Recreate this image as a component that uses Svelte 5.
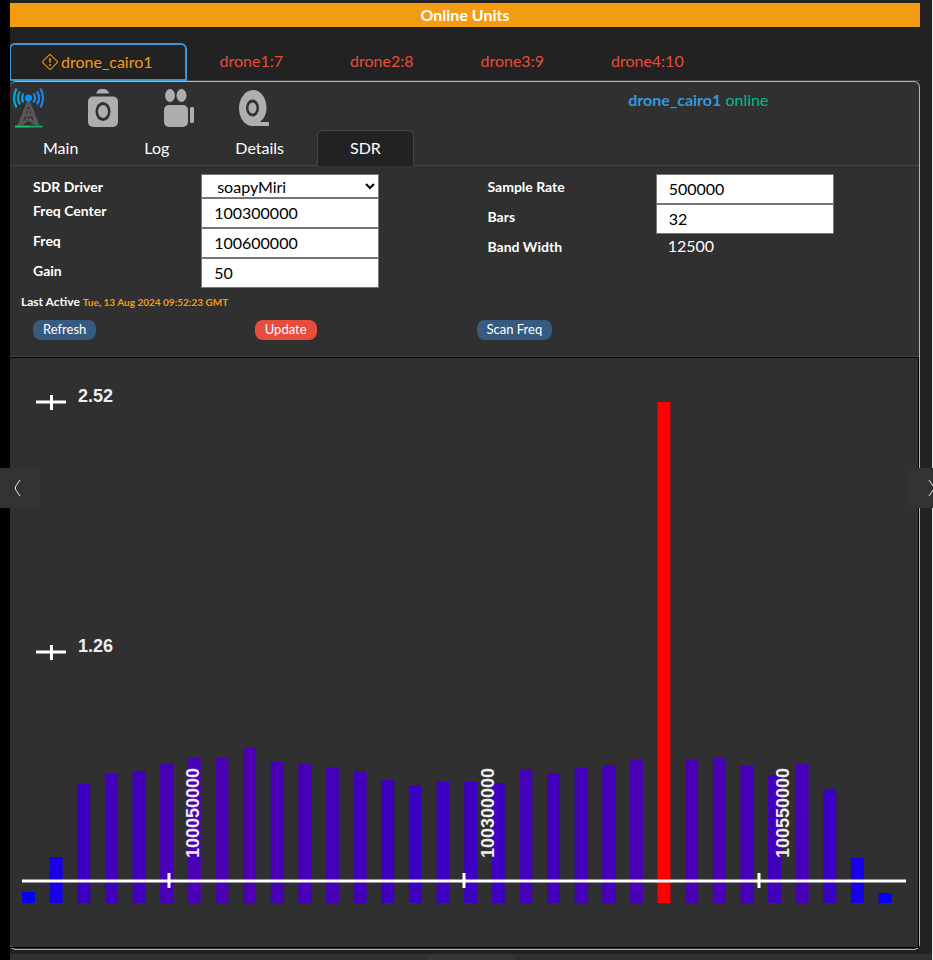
<script>
  const units = ['drone1:7', 'drone2:8', 'drone3:9', 'drone4:10'];
  const sections = ['Main', 'Log', 'Details', 'SDR'];
  let section = $state('SDR');

  // Signal level of each frequency bin, in chart units
  const levels = [
    11, 46, 119, 129, 132, 140, 145, 145, 155, 141, 140, 136, 132, 123, 118, 121,
    121, 120, 134, 130, 135, 138, 143, 501, 143, 146, 137, 128, 139, 113, 45, 10
  ];
  const peak = Math.max(...levels);
  const baseline = 545;
  const step = 27.63;

  function shade(level) {
    const r = Math.round((level / peak) * 255);
    return `rgb(${r}, 0, ${255 - r})`;
  }

  const yTicks = [
    { label: '2.52', y: 44 },
    { label: '1.26', y: 294 }
  ];
  const xTicks = [
    { label: '100050000', x: 158 },
    { label: '100300000', x: 453 },
    { label: '100550000', x: 748 }
  ];
</script>

<div class="page">
  <main>
    <h1>Online Units</h1>

    <nav class="units" aria-label="Units">
      <a class="unit active" href="#drone_cairo1">
        <svg width="16" height="16" viewBox="0 0 16 16" fill="currentColor" aria-hidden="true">
          <path d="M6.95.435c.58-.58 1.52-.58 2.1 0l6.515 6.516c.58.58.58 1.519 0 2.098L9.05 15.565c-.58.58-1.519.58-2.098 0L.435 9.05a1.48 1.48 0 0 1 0-2.098zm1.4.7a.495.495 0 0 0-.7 0L1.134 7.65a.495.495 0 0 0 0 .7l6.516 6.516a.495.495 0 0 0 .7 0l6.516-6.516a.495.495 0 0 0 0-.7z" />
          <path d="M7.002 11a1 1 0 1 1 2 0 1 1 0 0 1-2 0M7.1 4.995a.905.905 0 1 1 1.8 0l-.35 3.507a.552.552 0 0 1-1.1 0z" />
        </svg>
        <span>drone_cairo1</span>
      </a>
      {#each units as unit}
        <a class="unit" href={'#' + unit}>{unit}</a>
      {/each}
    </nav>

    <section class="panel">
      <div class="top">
        <div class="tools">
          <button type="button" aria-label="Telemetry">
            <svg width="40" height="42" viewBox="0 0 40 42" fill="none" aria-hidden="true">
              <g stroke="#0b9be8" stroke-width="2.200">
                <path d="M6.500 0.500Q1.500 10 6.500 19.500" stroke="#08a5dc" />
                <path d="M10 3.500Q6 10 10 16.500" stroke="#08a5dc" />
                <path d="M13.500 5.500Q10.500 10 13.500 14.500" />
                <path d="M23.500 5.500Q26.500 10 23.500 14.500" stroke="#1688f0" />
                <path d="M27 3.500Q31 10 27 16.500" stroke="#1688f0" />
                <path d="M30.500 0.500Q35.500 10 30.500 19.500" stroke="#1a82e8" />
              </g>
              <path d="M17 13H20L29.500 37.500H25L18.500 33L12 37.500H7.500Z" fill="#575757" />
              <path d="M18.500 18L20 21H17ZM16 24L18 22.500L16.500 27ZM21 24L19 22.500L20.500 27ZM15 28L17 29L13 34ZM22 28L20 29L24 34ZM18.500 28L20 30L18.500 31L17 30Z" fill="#303030" />
              <circle cx="18.500" cy="10" r="3.500" fill="#0d8df5" />
              <path d="M5 38.500H19" stroke="#10c96c" stroke-width="2" />
              <path d="M19 38.500H32.500" stroke="#08a95b" stroke-width="2" />
            </svg>
          </button>
          <button type="button" aria-label="Take photo">
            <svg width="40" height="42" viewBox="0 0 40 42" aria-hidden="true">
              <path d="M11 5.500Q13 1 16 1H19Q22 1 24.500 5.500Z" fill="#aeaeae" />
              <rect x="3" y="8.500" width="30" height="30.500" rx="5" fill="#aeaeae" />
              <ellipse cx="18" cy="23.500" rx="7.500" ry="9.500" fill="#303030" />
              <ellipse cx="18" cy="23.500" rx="5" ry="6.500" fill="#aeaeae" />
            </svg>
          </button>
          <button type="button" aria-label="Record video">
            <svg width="40" height="42" viewBox="0 0 40 42" fill="#aeaeae" aria-hidden="true">
              <ellipse cx="10" cy="7.500" rx="5" ry="6.500" />
              <ellipse cx="21.500" cy="7.500" rx="5" ry="6.500" />
              <rect x="4" y="17" width="24" height="22" rx="5" />
              <rect x="30" y="19" width="4" height="16" rx="1.500" />
            </svg>
          </button>
          <button type="button" aria-label="Recordings">
            <svg width="40" height="42" viewBox="0 0 40 42" aria-hidden="true">
              <path d="M18 2C26 2 31.500 10 31.500 20Q31.500 29 25 34H34V38H17C9 37.500 4 29 4 20S10 2 18 2Z" fill="#aeaeae" />
              <ellipse cx="17.500" cy="20" rx="6.500" ry="8.500" fill="#303030" />
              <ellipse cx="17.500" cy="20" rx="4" ry="5.500" fill="#aeaeae" />
            </svg>
          </button>
        </div>
        <p class="status"><strong>drone_cairo1</strong> <span>online</span></p>
      </div>

      <div class="sections" role="tablist">
        {#each sections as name}
          <button type="button" role="tab" aria-selected={section === name} class:selected={section === name} onclick={() => (section = name)}>{name}</button>
        {/each}
      </div>

      <form onsubmit={(e) => e.preventDefault()}>
        <div class="fields">
          <div class="group">
            <div class="row short">
              <label for="driver">SDR Driver</label>
              <select id="driver"><option>soapyMiri</option></select>
            </div>
            <div class="row">
              <label for="center">Freq Center</label>
              <input id="center" type="text" value="100300000" />
            </div>
            <div class="row">
              <label for="freq">Freq</label>
              <input id="freq" type="text" value="100600000" />
            </div>
            <div class="row">
              <label for="gain">Gain</label>
              <input id="gain" type="text" value="50" />
            </div>
          </div>
          <div class="group">
            <div class="row">
              <label for="rate">Sample Rate</label>
              <input id="rate" type="text" value="500000" />
            </div>
            <div class="row">
              <label for="bars">Bars</label>
              <input id="bars" type="text" value="32" />
            </div>
            <div class="row">
              <label for="band">Band Width</label>
              <output id="band">12500</output>
            </div>
          </div>
        </div>

        <p class="last">Last Active <time>Tue, 13 Aug 2024 09:52:23 GMT</time></p>

        <div class="actions">
          <div><button type="button">Refresh</button></div>
          <div><button type="button" class="danger">Update</button></div>
          <div><button type="button">Scan Freq</button></div>
        </div>
      </form>

      <div class="chart">
        <svg viewBox="-1 0 908 589" role="img" aria-label="Spectrum">
          {#each levels as level, i}
            <rect x={11 + i * step} y={baseline - level} width="13" height={level} fill={shade(level)} />
          {/each}
          <g stroke="#fff" stroke-width="3">
            <path d="M11 523H895" />
            {#each xTicks as tick}
              <path d={`M${tick.x} 515V530`} />
            {/each}
            {#each yTicks as tick}
              <path d={`M25 ${tick.y}H55M40.500 ${tick.y - 7}V${tick.y + 8}`} />
            {/each}
          </g>
          {#each yTicks as tick}
            <text x="67" y={tick.y}>{tick.label}</text>
          {/each}
          {#each xTicks as tick}
            <text transform={`translate(${tick.x + 30} 500) rotate(-90)`}>{tick.label}</text>
          {/each}
        </svg>
      </div>
    </section>
  </main>
  <footer><div class="handle"></div></footer>

  <button type="button" class="side prev" aria-label="Previous">
    <svg width="16" height="16" viewBox="0 0 16 16" fill="none" stroke="#eee" aria-hidden="true"><path d="M10 0L5.500 6.500V9.500L10 16" /></svg>
  </button>
  <button type="button" class="side next" aria-label="Next">
    <svg width="16" height="16" viewBox="0 0 16 16" fill="none" stroke="#eee" aria-hidden="true"><path d="M6 0L10.500 6.500V9.500L6 16" /></svg>
  </button>
</div>

<style>
  :global(body) {
    background: #000;
    overflow-x: hidden;
  }
  .page,
  .page * {
    box-sizing: border-box;
  }
  .page {
    position: relative;
    margin-left: 10px;
    background: #222;
    border-right: 1px solid #e8e8e8;
    color: #fff;
    font: 16px/24px Lato, sans-serif;
  }
  button,
  input,
  select {
    font-family: inherit;
  }
  button {
    border: 0;
    padding: 0;
    background: none;
    color: inherit;
    cursor: pointer;
  }
  main {
    padding: 3px 12px 4px 0;
  }
  h1 {
    margin: 0;
    background: #f39c12;
    font-size: 16px;
    line-height: 24px;
    text-align: center;
  }
  .units {
    display: flex;
    margin-top: 16px;
    overflow-x: clip;
    border-bottom: 1px solid #444;
  }
  .unit {
    display: flex;
    align-items: center;
    height: 36px;
    padding: 0 34px 0 33px;
    color: #e74c3c;
    text-decoration: none;
  }
  .unit.active {
    gap: 3px;
    height: 38px;
    margin: 0 0 -1px -1px;
    padding: 0 32px 0 31px;
    border: 2px solid #3498db;
    border-radius: 6px 6px 0 0;
    color: #f39c12;
  }
  .panel {
    border: 1px solid #adb5bd;
    border-left: 0;
    border-radius: 6px;
    background: #303030;
  }
  .top {
    display: flex;
    justify-content: space-between;
    height: 48px;
  }
  .tools {
    display: flex;
    gap: 35px;
    padding-top: 6px;
  }
  .tools button {
    width: 40px;
    height: 42px;
  }
  .tools svg {
    display: block;
  }
  .status {
    flex: 0 0 32%;
    margin: 6px 0 0;
  }
  .status strong {
    color: #3498db;
  }
  .status span {
    color: #00bc8c;
  }
  .sections {
    display: flex;
    border-bottom: 1px solid #444;
  }
  .sections button {
    height: 36px;
    margin-bottom: -1px;
    padding: 0 32px 2px;
    border: 1px solid transparent;
    border-bottom: 0;
    border-radius: 6px 6px 0 0;
    font-size: 16px;
    line-height: 24px;
  }
  .sections .selected {
    border-color: #444;
    background: #222;
  }
  form {
    padding: 8px 11px 16px;
    border-bottom: 1px solid #444;
  }
  .fields {
    display: grid;
    grid-template-columns: 1fr 1fr;
    margin: 0 -11px;
  }
  .group {
    padding-left: 23px;
  }
  .row {
    display: grid;
    grid-template-columns: 168fr 178fr 85fr;
    grid-template-rows: 100%;
    height: 30px;
  }
  .row.short {
    height: 24px;
  }
  .row label {
    font-size: 14px;
    font-weight: 700;
    line-height: 26px;
  }
  .row input,
  .row select {
    width: 100%;
    min-width: 0;
    height: 100%;
    border: 1px solid #767676;
    border-radius: 0;
    padding: 0 12px 2px;
    background: #fff;
    color: #000;
    font-size: 16px;
  }
  .row select {
    padding: 0 0 0 11px;
  }
  .row output {
    padding-left: 12px;
  }
  .last {
    margin: 2px 0 0;
    font-size: 12px;
    font-weight: 700;
    line-height: 24px;
  }
  .last time {
    color: #f39c12;
    font-size: 10px;
  }
  .actions {
    display: grid;
    grid-template-columns: repeat(4, 1fr);
    margin-top: 6px;
  }
  .actions div {
    display: flex;
    padding-left: 12px;
  }
  .actions button {
    height: 20px;
    padding: 0 10px 2px;
    border-radius: 8px;
    background: #375a7f;
    font-size: 13px;
    line-height: 18px;
  }
  .actions .danger {
    background: #e74c3c;
  }
  .chart {
    margin-bottom: 1px;
    border: 1px solid #000;
    border-left: 0;
  }
  .chart svg {
    display: block;
    width: 100%;
  }
  .chart text {
    fill: #eee;
    font: bold 18px 'Liberation Sans', Arial, sans-serif;
  }
  footer {
    height: 6px;
    background: #303030;
  }
  .handle {
    width: 88px;
    height: 100%;
    margin: 0 auto;
    border-radius: 6px 6px 0 0;
    background: #363636;
  }
  .side {
    position: fixed;
    top: 468px;
    display: flex;
    align-items: center;
    justify-content: center;
    width: 40px;
    height: 40px;
    background: #333;
  }
  .prev {
    left: 0;
    padding-right: 5px;
    border-radius: 0 4px 4px 0;
  }
  .next {
    right: -16px;
    padding-left: 3px;
    border-radius: 4px 0 0 4px;
  }
</style>
